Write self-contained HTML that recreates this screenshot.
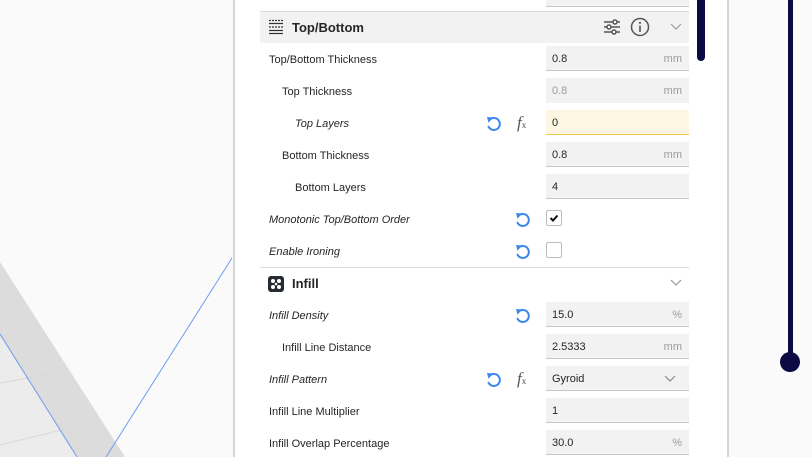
<!DOCTYPE html>
<html><head><meta charset="utf-8"><style>
*{margin:0;padding:0;box-sizing:border-box}
body{width:812px;height:457px;overflow:hidden;background:#fafafa;position:relative;font-family:"Liberation Sans","DejaVu Sans",sans-serif;color:#262626}
.panel{position:absolute;left:233px;top:0;width:496px;height:457px;background:#fff;border-left:2px solid #d6d6d6;border-right:2px solid #d6d6d6}
.a{position:absolute}
.lbl{position:absolute;font-size:11px;line-height:14px;margin-top:1px}
.i{font-style:italic}
.f{position:absolute;left:546px;width:143px;height:25px;background:#f2f2f2;border-bottom:1px solid #c8c8c8;font-size:11px;line-height:26px;padding-left:6px}
.u{position:absolute;right:7px;top:0;color:#9a9a9a}
.hd{position:absolute;left:260px;width:429px;height:31px;font-size:13px;font-weight:bold;line-height:32px}
.cb{position:absolute;left:546px;width:16px;height:16px;border:1px solid #bdbdbd;border-radius:2px;background:#fff}
</style></head><body>
<svg class="a" style="left:0;top:0" width="233" height="457">
<polygon points="0,262 0,457 125,457" fill="#dcdcdc"/>
<polygon points="0,334 0,457 77,457" fill="#ececec"/>
<g stroke="#d8d8d8" stroke-width="1"><line x1="0" y1="383" x2="55" y2="373"/><line x1="0" y1="445" x2="70" y2="428"/></g>
<line x1="0" y1="334" x2="77" y2="457" stroke="#6c9cf0" stroke-width="1"/>
<line x1="232" y1="258" x2="106" y2="457" stroke="#6c9cf0" stroke-width="1"/>
</svg>
<div class="panel"></div>
<div class="a" style="left:546px;top:0;width:143px;height:7px;background:#f2f2f2;border-bottom:1px solid #c8c8c8"></div>
<div class="a" style="left:260px;top:11px;width:429px;height:1px;background:#dcdcdc"></div>
<div class="a" style="left:697px;top:-10px;width:8px;height:71px;background:#0b0a42;border-radius:4px"></div>
<div class="a" style="left:788px;top:0;width:5px;height:362px;background:#0b0a42"></div>
<div class="a" style="left:780px;top:352px;width:20px;height:20px;background:#0b0a42;border-radius:50%"></div>

<div class="hd" style="top:12px;background:#f2f2f2"><span style="position:absolute;left:32px">Top/Bottom</span></div>
<svg class="a" style="left:268px;top:19px" width="16" height="17"><g stroke="#333" stroke-width="1.2"><line x1="1" y1="1.5" x2="15" y2="1.5" stroke-dasharray="2 1"/><line x1="1" y1="4.5" x2="15" y2="4.5"/><line x1="1" y1="8" x2="15" y2="8" stroke-dasharray="2 1"/><line x1="1" y1="11.5" x2="15" y2="11.5"/><line x1="1" y1="14.5" x2="15" y2="14.5"/></g></svg>
<svg class="a" style="left:603px;top:18px" width="18" height="18"><g stroke="#555" stroke-width="1.5" fill="#fff"><line x1="1" y1="4" x2="17" y2="4"/><line x1="1" y1="9" x2="17" y2="9"/><line x1="1" y1="14" x2="17" y2="14"/><circle cx="12" cy="4" r="2"/><circle cx="6" cy="9" r="2"/><circle cx="11" cy="14" r="2"/></g></svg>
<svg class="a" style="left:630px;top:17px" width="20" height="20"><circle cx="10" cy="10" r="8.5" fill="none" stroke="#555" stroke-width="1.5"/><line x1="10" y1="8.5" x2="10" y2="15" stroke="#555" stroke-width="1.6"/><circle cx="10" cy="5.8" r="1.1" fill="#555"/></svg>
<svg class="a" style="left:670px;top:23px" width="12" height="8"><polyline points="1,1 6,6 11,1" fill="none" stroke="#999" stroke-width="1.2"/></svg>

<div class="lbl" style="left:269px;top:52px">Top/Bottom Thickness</div>
<div class="f" style="top:46px">0.8<span class="u">mm</span></div>
<div class="lbl" style="left:282px;top:84px">Top Thickness</div>
<div class="f" style="top:78px;color:#9a9a9a;border-bottom:none">0.8<span class="u">mm</span></div>
<div class="lbl i" style="left:295px;top:116px">Top Layers</div>
<div class="f" style="top:110px;background:#fdf6e2;border-bottom:1px solid #f2c94c">0</div>
<div class="lbl" style="left:282px;top:148px">Bottom Thickness</div>
<div class="f" style="top:142px">0.8<span class="u">mm</span></div>
<div class="lbl" style="left:295px;top:180px">Bottom Layers</div>
<div class="f" style="top:174px">4</div>
<div class="lbl i" style="left:269px;top:212px">Monotonic Top/Bottom Order</div>
<div class="cb" style="top:210px"><svg width="14" height="14"><polyline points="3.5,7 6,9.5 10.5,4.5" fill="none" stroke="#111" stroke-width="2"/></svg></div>
<div class="lbl i" style="left:269px;top:244px">Enable Ironing</div>
<div class="cb" style="top:242px"></div>
<div class="a" style="left:260px;top:267px;width:429px;height:1px;background:#dcdcdc"></div>

<div class="hd" style="top:268px"><span style="position:absolute;left:32px">Infill</span></div>
<svg class="a" style="left:268px;top:276px" width="16" height="16"><rect x="0" y="0" width="16" height="16" rx="3" fill="#262a33"/><g fill="#fff"><circle cx="5" cy="5" r="2"/><circle cx="11" cy="5" r="2"/><circle cx="5" cy="11" r="2"/><circle cx="11" cy="11" r="2"/><circle cx="8" cy="8" r="1.3"/></g></svg>
<svg class="a" style="left:670px;top:279px" width="12" height="8"><polyline points="1,1 6,6 11,1" fill="none" stroke="#999" stroke-width="1.2"/></svg>

<div class="lbl i" style="left:269px;top:308px">Infill Density</div>
<div class="f" style="top:302px">15.0<span class="u">%</span></div>
<div class="lbl" style="left:282px;top:340px">Infill Line Distance</div>
<div class="f" style="top:334px">2.5333<span class="u">mm</span></div>
<div class="lbl i" style="left:269px;top:372px">Infill Pattern</div>
<div class="f" style="top:366px">Gyroid<svg style="position:absolute;right:13px;top:9px" width="12" height="8"><polyline points="1,1 6,6 11,1" fill="none" stroke="#888" stroke-width="1.2"/></svg></div>
<div class="lbl" style="left:269px;top:404px">Infill Line Multiplier</div>
<div class="f" style="top:398px">1</div>
<div class="lbl" style="left:269px;top:436px">Infill Overlap Percentage</div>
<div class="f" style="top:430px">30.0<span class="u">%</span></div>

<svg width="0" height="0" style="position:absolute"><defs>
<g id="rs"><path d="M4.8 4.5 A6 6 0 1 1 3.2 11" fill="none" stroke="#3b86ef" stroke-width="2"/><polygon points="2,2 8,2.5 3.5,7.8" fill="#3b86ef"/></g>
</defs></svg>
<svg class="a" style="left:485px;top:115px" width="18" height="18"><use href="#rs"/></svg>
<svg class="a" style="left:514px;top:211px" width="18" height="18"><use href="#rs"/></svg>
<svg class="a" style="left:514px;top:243px" width="18" height="18"><use href="#rs"/></svg>
<svg class="a" style="left:514px;top:307px" width="18" height="18"><use href="#rs"/></svg>
<svg class="a" style="left:485px;top:371px" width="18" height="18"><use href="#rs"/></svg>
<div class="a" style="left:517px;top:113px;font-family:'Liberation Serif',serif;font-style:italic;font-size:17px;color:#555">f<span style="font-size:9px;font-style:normal">x</span></div>
<div class="a" style="left:517px;top:369px;font-family:'Liberation Serif',serif;font-style:italic;font-size:17px;color:#555">f<span style="font-size:9px;font-style:normal">x</span></div>
</body></html>
